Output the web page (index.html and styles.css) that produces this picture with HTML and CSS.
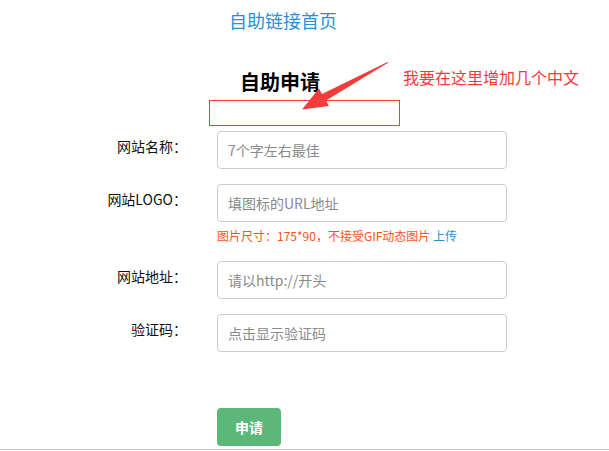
FILE: index.html
```html
<!DOCTYPE html>
<html lang="zh-CN">
<head>
    <meta charset="UTF-8">
    <meta name="viewport" content="width=device-width, initial-scale=1.0">
    <title>自助申请</title>
    <link rel="stylesheet" href="styles.css">
</head>
<body>
<div class="page">
    <a class="home-link" href="#">自助链接首页</a>
    <h2 class="form-title">自助申请</h2>
    <div class="note-box"></div>

    <form class="apply-form">
        <div class="row">
            <label class="row-label">网站名称：</label>
            <div class="field">
                <input type="text" placeholder="7个字左右最佳">
            </div>
        </div>
        <div class="row">
            <label class="row-label">网站LOGO：</label>
            <div class="field">
                <input type="text" placeholder="填图标的URL地址">
                <p class="hint">图片尺寸：175*90，不接受GIF动态图片 <a href="#">上传</a></p>
            </div>
        </div>
        <div class="row">
            <label class="row-label">网站地址：</label>
            <div class="field">
                <input type="text" placeholder="请以http://开头">
            </div>
        </div>
        <div class="row">
            <label class="row-label">验证码：</label>
            <div class="field">
                <input type="text" placeholder="点击显示验证码">
            </div>
        </div>
        <div class="actions">
            <button type="button" class="btn-submit">申请</button>
        </div>
    </form>

    <div class="footer-line"></div>

    <!-- annotation drawn over the screenshot -->
    <span class="note-text">我要在这里增加几个中文</span>
    <svg class="note-arrow" width="609" height="451" viewBox="0 0 609 451">
        <polygon points="388.5,62.5 326,100.5 329,106 302,109.5 319,88.5 322,94 387.5,62" fill="#f23c3c"/>
    </svg>
</div>
</body>
</html>
```

FILE: styles.css
```css
:root {
    --blue: #2b8fd6;
    --red: #f23c3c;
    --border: #cccccc;
    --green: #5cb878;
}

* {
    margin: 0;
    padding: 0;
    box-sizing: border-box;
}

body {
    font-family: "Noto Sans CJK SC", "Liberation Sans", sans-serif;
    color: #222;
    background: #fff;
}

.page {
    position: relative;
    width: 609px;
    height: 451px;
    overflow: hidden;
}

.home-link {
    display: block;
    margin: 8px 0 0 229px;
    font-size: 18px;
    line-height: 24px;
    color: var(--blue);
    text-decoration: none;
}

.form-title {
    margin: 37px 0 0 240px;
    font-size: 20px;
    line-height: 26px;
    font-weight: bold;
    color: #000;
}

.note-box {
    width: 191px;
    height: 26px;
    margin: 5px 0 0 209px;
    border: 1px solid var(--red);
}

.apply-form {
    display: flex;
    flex-direction: column;
    gap: 15px;
    margin-top: 5px;
}

.row {
    display: flex;
    gap: 30px;
}

.row-label {
    flex: 0 0 187px;
    text-align: right;
    font-size: 14px;
    line-height: 22px;
    padding-top: 4px;
    color: #111;
}

.field input {
    display: block;
    width: 290px;
    height: 38px;
    padding: 0 10px;
    border: 1px solid var(--border);
    border-radius: 4px;
    font-family: inherit;
    font-size: 14px;
    color: #333;
    outline: none;
}

.field input::placeholder {
    color: #8a8a8a;
}

.hint {
    margin-top: 4px;
    font-size: 12px;
    line-height: 20px;
    color: #f5541e;
}

.hint a {
    color: var(--blue);
    text-decoration: none;
}

.actions {
    margin: 41px 0 0 217px;
}

.btn-submit {
    width: 64px;
    height: 38px;
    border: none;
    border-radius: 4px;
    background: var(--green);
    color: #fff;
    font-family: inherit;
    font-size: 14px;
    font-weight: bold;
}

.footer-line {
    margin-top: 3px;
    border-top: 1px solid #c4c4c4;
}

.note-text {
    position: absolute;
    left: 403px;
    top: 66px;
    font-size: 16px;
    line-height: 22px;
    color: var(--red);
}

.note-arrow {
    position: absolute;
    left: 0;
    top: 0;
    pointer-events: none;
}
```
